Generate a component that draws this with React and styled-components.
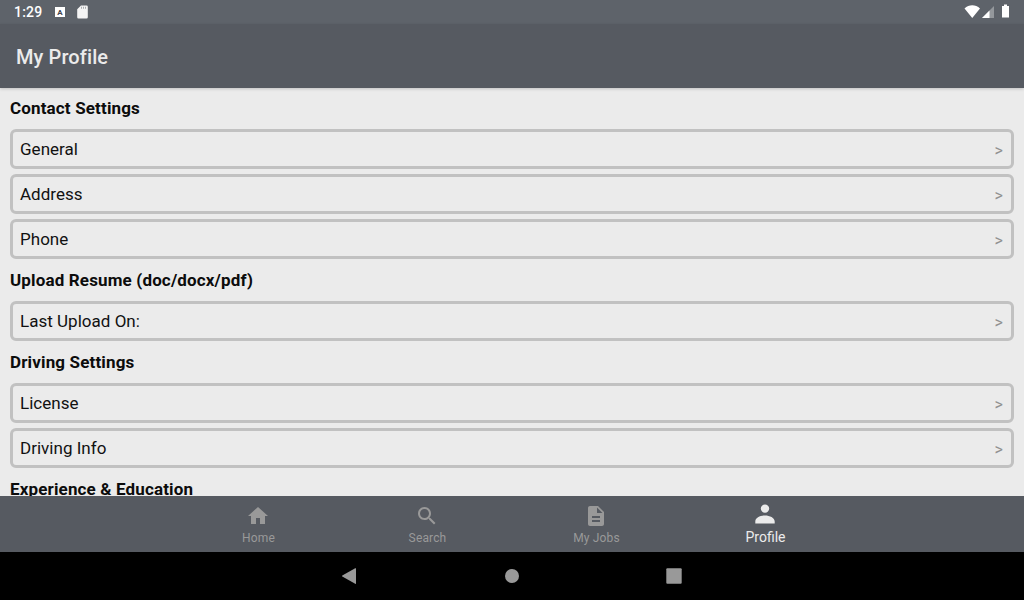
import styled, { createGlobalStyle } from "styled-components"

const GlobalStyle = createGlobalStyle`
    * {
        box-sizing: border-box;
    }

    body {
        margin: 0;
        overflow: hidden;
        font-family: Roboto, sans-serif;
    }
`

const sections = [
    { title: "Contact Settings", items: ["General", "Address", "Phone"] },
    { title: "Upload Resume (doc/docx/pdf)", items: ["Last Upload On:"] },
    { title: "Driving Settings", items: ["License", "Driving Info"] },
    { title: "Experience & Education", items: [] },
]

const tabs = [
    { label: "Home", path: "M10 20v-6h4v6h5v-8h3L12 3 2 12h3v8z" },
    {
        label: "Search",
        path: "M15.5 14h-.79l-.28-.27C15.41 12.59 16 11.11 16 9.5 16 5.91 13.09 3 9.5 3S3 5.91 3 9.5 5.91 16 9.5 16c1.61 0 3.09-.59 4.23-1.57l.27.28v.79l5 4.99L20.49 19l-4.99-5zm-6 0C7.01 14 5 11.99 5 9.5S7.01 5 9.5 5 14 7.01 14 9.5 11.99 14 9.5 14z",
    },
    {
        label: "My Jobs",
        path: "M14 2H6c-1.1 0-1.99.9-1.99 2L4 20c0 1.1.89 2 1.99 2H18c1.1 0 2-.9 2-2V8l-6-6zm2 16H8v-2h8v2zm0-4H8v-2h8v2zm-3-5V3.5L18.5 9H13z",
    },
    {
        label: "Profile",
        path: "M12 2.4a4.2 4.2 0 1 1 0 8.4a4.2 4.2 0 1 1 0-8.4zM2.3 21.6v-2.2c0-3.7 5-6 9.7-6s9.7 2.3 9.7 6v2.2z",
        active: true,
    },
]

// Status bar
const StatusBar = () => {
  return (
    <Status>
        <Clock>1:29</Clock>
        <Keyboard>A</Keyboard>
        <svg width="11" height="14" viewBox="0 0 11 14">
            <path d="M4 .5h5.5a1.3 1.3 0 0 1 1.3 1.3v10.4a1.3 1.3 0 0 1-1.3 1.3h-8A1.3 1.3 0 0 1 .2 12.2V4.3z" fill="#f4f4f4" />
            <path d="M4 1.700h1v2H4zM6 1.700h1v2H6zM8 1.700h1v2H8z" fill="#a9acaf" />
        </svg>
        <Signals width="48" height="16" viewBox="0 0 48 16">
            <path d="M.5 4.500C5 .3 11.500 .3 16 4.500L8.250 14z" fill="#fff" />
            <path d="M30 2v12H18z" fill="#94989c" />
            <path d="M25.500 6.500V14H18z" fill="#fff" />
            <path d="M40 .5h3v1.500h2V13.500h-7V2h2z" fill="#fff" />
        </Signals>
    </Status>
  )
}

const Status = styled.div`
    display: flex;
    align-items: center;
    height: 24px;
    flex-shrink: 0;
    padding: 0 12px 0 14px;
    background: #5e636a;
`

const Clock = styled.span`
    width: 41px;
    color: #fff;
    font-size: 14px;
    font-weight: 500;
    letter-spacing: 0.2px;
`

const Keyboard = styled.span`
    display: flex;
    align-items: center;
    justify-content: center;
    width: 10px;
    height: 10px;
    margin-right: 12px;
    background: #fff;
    color: #42464b;
    font-size: 8px;
    font-weight: 700;
`

const Signals = styled.svg`
    margin-left: auto;
`

// One bordered line of a section
const Row = ({ text }) => {
  return (
    <Item>
        <span>{text}</span>
        <Arrow>&gt;</Arrow>
    </Item>
  )
}

const Item = styled.div`
    display: flex;
    align-items: center;
    justify-content: space-between;
    height: 40px;
    margin-bottom: 5px;
    padding: 0 8px 0 7px;
    border: 3px solid #c1c1c1;
    border-radius: 6px;
    color: #111;
    font-size: 17px;
    letter-spacing: 0.02px;
`

const Arrow = styled.span`
    padding-top: 2px;
    color: #919191;
    font-size: 16px;
`

const Screen = styled.div`
    display: flex;
    flex-direction: column;
    height: 600px;
    background: #ebebeb;
`

const Header = styled.header`
    flex-shrink: 0;
    height: 64px;
    padding-left: 16px;
    background: #565a61;
    box-shadow: 0 1px 3px rgba(0, 0, 0, 0.18);
    color: #ebebeb;
    font-size: 20px;
    font-weight: 500;
    line-height: 66px;
    letter-spacing: 0.1px;
`

const Content = styled.main`
    flex: 1;
    min-height: 0;
    overflow: hidden;
    padding: 4px 10px 0;
`

const SectionTitle = styled.div`
    height: 37px;
    color: #0c0c0c;
    font-size: 17px;
    font-weight: 700;
    line-height: 33px;
    letter-spacing: 0.15px;
    white-space: nowrap;
`

const TabBar = styled.nav`
    display: flex;
    justify-content: center;
    height: 56px;
    flex-shrink: 0;
    background: #565a61;
`

const Tab = styled.div`
    display: flex;
    flex-direction: column;
    align-items: center;
    width: 169px;
    padding-top: ${(props) => (props.$active ? "6px" : "8px")};
    color: ${(props) => (props.$active ? "#ebebeb" : "#999")};
    font-size: ${(props) => (props.$active ? "14px" : "12px")};
    line-height: ${(props) => (props.$active ? "22px" : "20px")};
    letter-spacing: ${(props) => (props.$active ? "0" : "0.15px")};
`

const TabIcon = styled.svg`
    width: 24px;
    height: 24px;
    margin-right: 1px;
    fill: currentColor;
`

const SystemBar = styled.div`
    display: flex;
    align-items: center;
    justify-content: center;
    height: 48px;
    flex-shrink: 0;
    gap: 146px;
    background: #000;
`

const App = () => {
  return (
    <Screen>
        <GlobalStyle />
        <StatusBar />
        <Header>My Profile</Header>
        <Content>
            {sections.map((section) => (
                <section key={section.title}>
                    <SectionTitle>{section.title}</SectionTitle>
                    {section.items.map((item) => <Row key={item} text={item} />)}
                </section>
            ))}
        </Content>
        <TabBar>
            {tabs.map((tab) => (
                <Tab key={tab.label} $active={tab.active}>
                    <TabIcon viewBox="0 0 24 24">
                        <path d={tab.path} />
                    </TabIcon>
                    {tab.label}
                </Tab>
            ))}
        </TabBar>
        <SystemBar>
            <svg width="16" height="16" viewBox="1 0 16 16" fill="#999">
                <path d="M15 .5v15q0 .6-.8.3L1.300 8.500q-.8-.5 0-1L14.200.2q.8-.3.8.3z" />
            </svg>
            <svg width="16" height="16" viewBox="0 0 16 16" fill="#999">
                <circle cx="8" cy="8" r="7" />
            </svg>
            <svg width="16" height="16" viewBox="0 0 16 16" fill="#999">
                <rect x="0.3" y="0.3" width="15.4" height="15.4" rx="1" />
            </svg>
        </SystemBar>
    </Screen>
  )
}

export default App
